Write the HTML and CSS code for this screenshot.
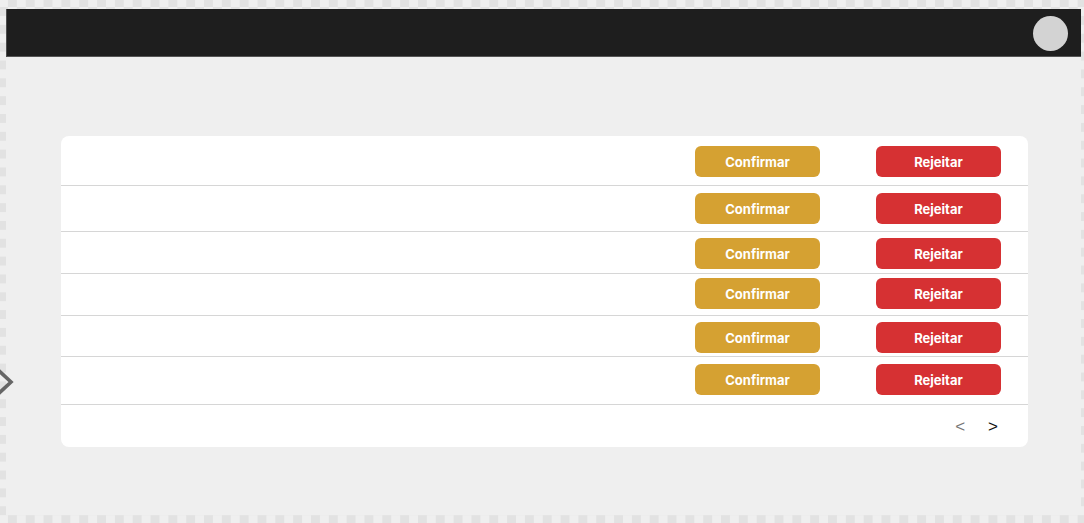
FILE: index.html
```html
<!DOCTYPE html>
<html lang="pt">
<head>
<meta charset="utf-8">
<title>Solicitações</title>
<link rel="stylesheet" href="styles.css">
</head>
<body>
<div class="app">
  <header class="topbar">
    <div class="avatar"></div>
  </header>
  <main class="content">
    <section class="card">
      <div class="row row-1">
        <button class="btn btn-confirm">Confirmar</button>
        <button class="btn btn-reject">Rejeitar</button>
      </div>
      <div class="row row-2">
        <button class="btn btn-confirm">Confirmar</button>
        <button class="btn btn-reject">Rejeitar</button>
      </div>
      <div class="row row-3">
        <button class="btn btn-confirm">Confirmar</button>
        <button class="btn btn-reject">Rejeitar</button>
      </div>
      <div class="row row-4">
        <button class="btn btn-confirm">Confirmar</button>
        <button class="btn btn-reject">Rejeitar</button>
      </div>
      <div class="row row-5">
        <button class="btn btn-confirm">Confirmar</button>
        <button class="btn btn-reject">Rejeitar</button>
      </div>
      <div class="row row-6">
        <button class="btn btn-confirm">Confirmar</button>
        <button class="btn btn-reject">Rejeitar</button>
      </div>
      <div class="pager">
        <span class="pager-btn pager-prev">&lt;</span>
        <span class="pager-btn pager-next">&gt;</span>
      </div>
    </section>
  </main>
</div>
<svg class="side-chevron" width="16" height="34" viewBox="0 0 16 34">
  <polyline points="-4,2 11,16 -4,30" fill="none" stroke="#666666" stroke-width="3.6" stroke-linejoin="miter"/>
</svg>
</body>
</html>
```
FILE: styles.css
```css
html, body {
  margin: 0;
  padding: 0;
  height: 100%;
}

body {
  background-color: #efefef;
  background-image: conic-gradient(#e2e2e2 0 25%, #efefef 0 50%, #e2e2e2 0 75%, #efefef 0);
  background-size: 17.83px 17.83px;
  background-position: -1px -1.9px;
  font-family: Inter, "Noto Sans", sans-serif;
  overflow: hidden;
  position: relative;
}

.app {
  margin: 9px 3px 0 6px;
  height: 506px;
  background: #efefef;
  display: flex;
  flex-direction: column;
}

.topbar {
  height: 47px;
  background: #1e1e1e;
  border-left: 1px solid #4d4d4d;
  border-bottom: 1px solid #555555;
  display: flex;
  align-items: center;
  justify-content: flex-end;
  padding-right: 13px;
}

.avatar {
  width: 35px;
  height: 35px;
  border-radius: 50%;
  background: #d3d3d3;
  margin-top: 2px;
}

.content {
  padding: 79px 53px 0 55px;
}

.card {
  background: #ffffff;
  border-radius: 8px;
  display: flex;
  flex-direction: column;
}

.row {
  display: flex;
  justify-content: flex-end;
  align-items: flex-start;
  gap: 56px;
  padding-right: 27px;
  border-bottom: 1px solid #d6d6d6;
  box-sizing: border-box;
}

.row-1 { height: 50px; padding-top: 10px; }
.row-2 { height: 46px; padding-top: 7px; }
.row-3 { height: 42px; padding-top: 6px; }
.row-4 { height: 42px; padding-top: 4px; }
.row-5 { height: 41px; padding-top: 6px; }
.row-6 { height: 48px; padding-top: 7px; }

.btn {
  width: 125px;
  height: 31px;
  border: none;
  border-radius: 6px;
  color: #ffffff;
  font-family: Inter, "Noto Sans", sans-serif;
  font-size: 13px;
  font-weight: 700;
  padding: 0;
  cursor: pointer;
}

.btn-confirm { background: #d5a132; }
.btn-reject { background: #d63133; }

.pager {
  height: 42px;
  display: flex;
  align-items: center;
  justify-content: flex-end;
  gap: 22px;
  padding-right: 30px;
}

.pager-btn {
  font-family: "Liberation Sans", Arial, sans-serif;
  font-size: 17px;
  line-height: 1;
}

.pager-prev { color: #777777; margin-right: 1px; }
.pager-next { color: #111111; }

.side-chevron {
  position: absolute;
  left: 0;
  top: 366px;
}
```
